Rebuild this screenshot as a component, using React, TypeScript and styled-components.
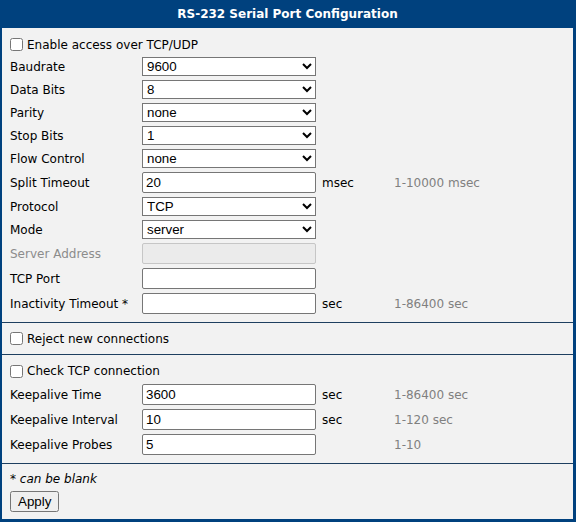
import React from "react";
import styled, { createGlobalStyle } from "styled-components";

const GlobalStyle = createGlobalStyle`
  html, body {
    margin: 0;
    padding: 0;
    background: #ffffff;
  }
  body {
    font-family: "DejaVu Sans", Verdana, sans-serif;
    font-size: 12px;
    color: #000000;
  }
`;

const Frame = styled.div`
  width: 576px;
  height: 522px;
  box-sizing: border-box;
  border: solid #00417e;
  border-width: 0 3px 3px 2px;
  background: #f2f2f2;
  display: flex;
  flex-direction: column;
`;

const Header = styled.div`
  height: 28px;
  flex: none;
  background: #00417e;
  color: #ffffff;
  font-weight: bold;
  font-size: 12px;
  display: flex;
  align-items: center;
  justify-content: center;
`;

const Section = styled.div<{ $pad: string; $grow?: boolean }>`
  padding: ${(p) => p.$pad};
  border-top: 1px solid #1e3f60;
  flex: ${(p) => (p.$grow ? "1" : "none")};

  &:nth-child(2) {
    border-top: none;
  }
`;

const CheckRow = styled.label<{ $h?: number }>`
  display: flex;
  align-items: center;
  height: ${(p) => p.$h ?? 21}px;
  padding-left: 8px;
`;

const Check = styled.input.attrs({ type: "checkbox" })`
  width: 13px;
  height: 13px;
  margin: 0 4px 0 0;
`;

const FieldRow = styled.div<{ $tall?: boolean }>`
  display: flex;
  align-items: center;
  height: ${(p) => (p.$tall ? 25 : 23)}px;
  padding-left: 8px;
`;

const Label = styled.span<{ $disabled?: boolean }>`
  width: 132px;
  flex: none;
  color: ${(p) => (p.$disabled ? "#8c8c8c" : "#000000")};
`;

const Select = styled.select`
  width: 174px;
  height: 19px;
  margin: 0;
  flex: none;
  font-family: "Liberation Sans", Arial, sans-serif;
  font-size: 13.33px;
  color: #000000;
  background: #ffffff;
`;

const TextInput = styled.input`
  width: 174px;
  height: 21px;
  box-sizing: border-box;
  margin: 0;
  flex: none;
  padding: 1px 3px;
  border: 1px solid #767676;
  border-radius: 2px;
  background: #ffffff;
  font-family: "Liberation Sans", Arial, sans-serif;
  font-size: 13.33px;
  color: #000000;

  &:disabled {
    background: #ebebeb;
    border-color: #c6c6c6;
  }
`;

const Unit = styled.span`
  width: 72px;
  margin-left: 6px;
  flex: none;
`;

const Range = styled.span`
  color: #808080;
`;

const Note = styled.div`
  padding-left: 8px;
  height: 17px;
  line-height: 17px;

  em {
    font-style: italic;
  }
`;

const ApplyButton = styled.button`
  margin: 3px 0 0 8px;
  height: 21px;
  padding: 0 6px;
  font-family: "Liberation Sans", Arial, sans-serif;
  font-size: 13.33px;
  color: #000000;
`;

type Field = {
  label: string;
  kind: "select" | "text";
  value?: string;
  options?: string[];
  unit?: string;
  range?: string;
  disabled?: boolean;
};

const mainFields: Field[] = [
  { label: "Baudrate", kind: "select", value: "9600", options: ["1200", "2400", "4800", "9600", "19200", "38400", "57600", "115200"] },
  { label: "Data Bits", kind: "select", value: "8", options: ["7", "8"] },
  { label: "Parity", kind: "select", value: "none", options: ["none", "even", "odd"] },
  { label: "Stop Bits", kind: "select", value: "1", options: ["1", "2"] },
  { label: "Flow Control", kind: "select", value: "none", options: ["none", "hardware"] },
  { label: "Split Timeout", kind: "text", value: "20", unit: "msec", range: "1-10000 msec" },
  { label: "Protocol", kind: "select", value: "TCP", options: ["TCP", "UDP"] },
  { label: "Mode", kind: "select", value: "server", options: ["server", "client"] },
  { label: "Server Address", kind: "text", value: "", disabled: true },
  { label: "TCP Port", kind: "text", value: "" },
  { label: "Inactivity Timeout *", kind: "text", value: "", unit: "sec", range: "1-86400 sec" },
];

const keepaliveFields: Field[] = [
  { label: "Keepalive Time", kind: "text", value: "3600", unit: "sec", range: "1-86400 sec" },
  { label: "Keepalive Interval", kind: "text", value: "10", unit: "sec", range: "1-120 sec" },
  { label: "Keepalive Probes", kind: "text", value: "5", range: "1-10" },
];

const FieldLine: React.FC<{ field: Field }> = ({ field }) => (
  <FieldRow $tall={field.kind === "text"}>
    <Label $disabled={field.disabled}>{field.label}</Label>
    {field.kind === "select" ? (
      <Select defaultValue={field.value}>
        {field.options?.map((o) => (
          <option key={o} value={o}>
            {o}
          </option>
        ))}
      </Select>
    ) : (
      <TextInput type="text" defaultValue={field.value} disabled={field.disabled} />
    )}
    {(field.unit || field.range) && <Unit>{field.unit}</Unit>}
    {field.range && <Range>{field.range}</Range>}
  </FieldRow>
);

const App: React.FC = () => {
  return (
    <>
      <GlobalStyle />
      <Frame>
        <Header>RS-232 Serial Port Configuration</Header>
        <Section $pad="6px 0 6px">
          <CheckRow>
            <Check />
            Enable access over TCP/UDP
          </CheckRow>
          {mainFields.map((f) => (
            <FieldLine key={f.label} field={f} />
          ))}
        </Section>
        <Section $pad="5px 0 5px">
          <CheckRow>
            <Check />
            Reject new connections
          </CheckRow>
        </Section>
        <Section $pad="5px 0 6px">
          <CheckRow $h={22}>
            <Check />
            Check TCP connection
          </CheckRow>
          {keepaliveFields.map((f) => (
            <FieldLine key={f.label} field={f} />
          ))}
        </Section>
        <Section $pad="7px 0 0" $grow>
          <Note>
            * <em>can be blank</em>
          </Note>
          <ApplyButton type="button">Apply</ApplyButton>
        </Section>
      </Frame>
    </>
  );
};

export default App;
